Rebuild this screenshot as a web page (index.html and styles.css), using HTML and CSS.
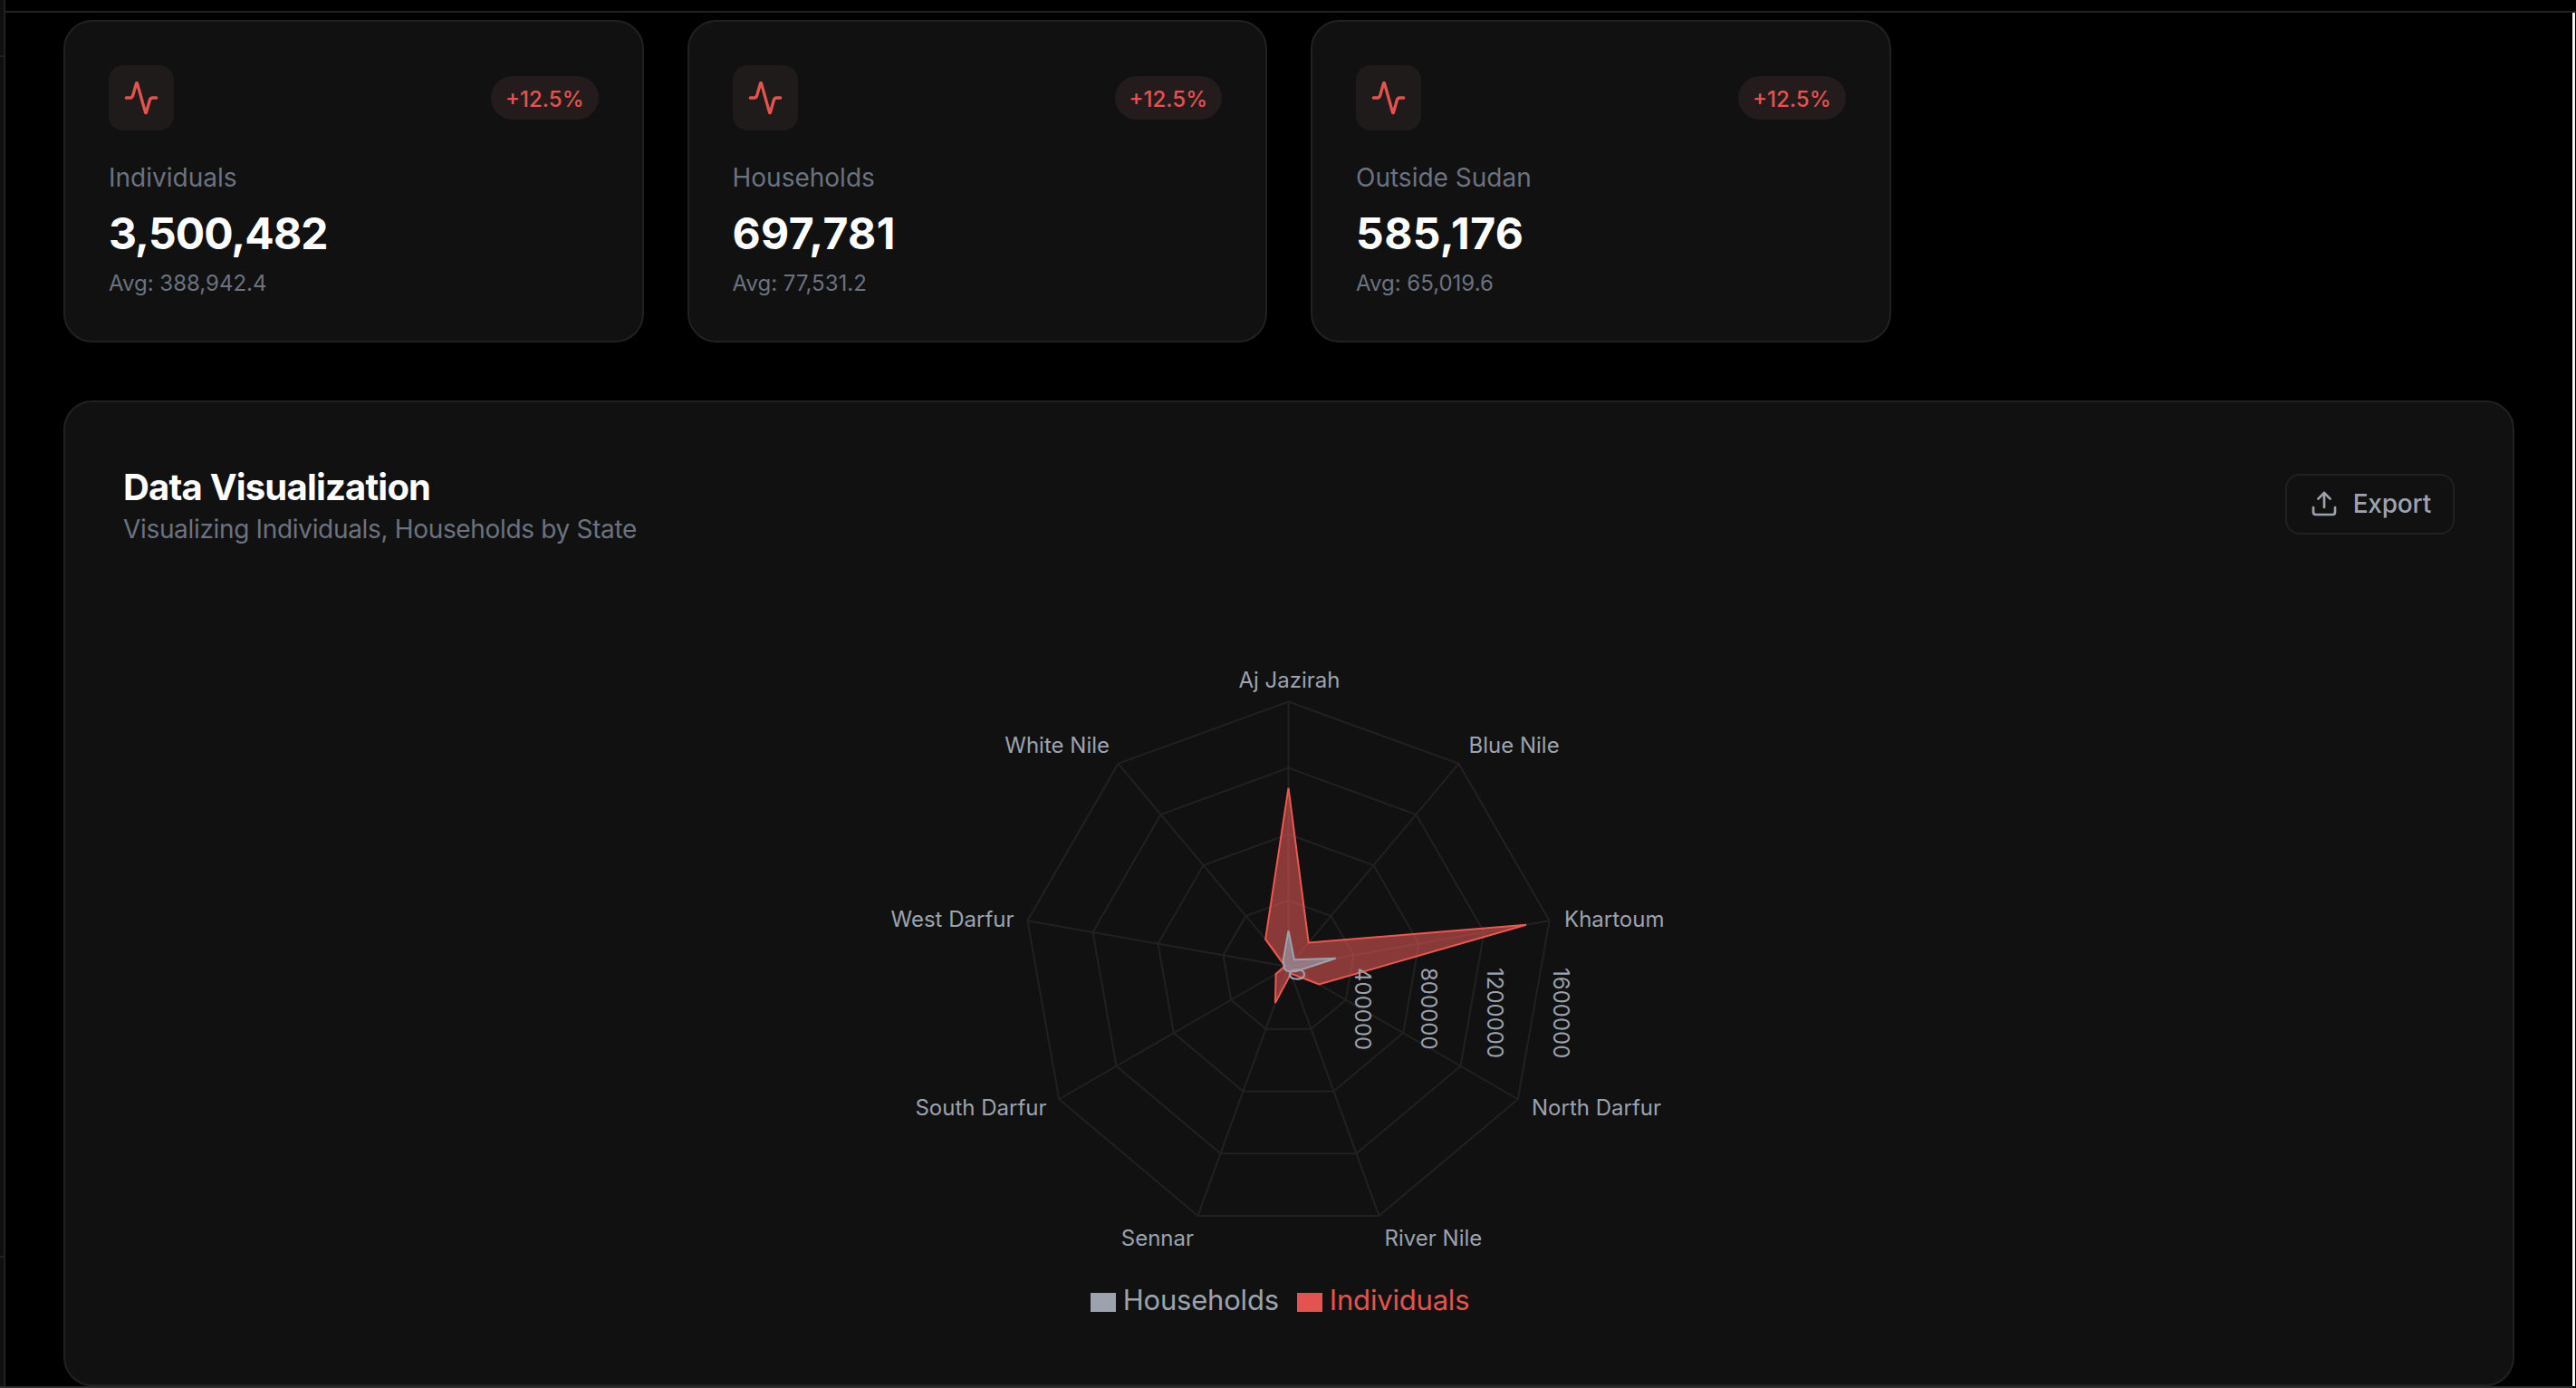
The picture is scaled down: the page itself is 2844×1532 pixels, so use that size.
FILE: index.html
```html
<!DOCTYPE html>
<html lang="en">
<head>
<meta charset="utf-8">
<title>Data Visualization</title>
<link rel="stylesheet" href="styles.css">
</head>
<body>
<div class="app">
  <div class="frame">
    <aside class="rail">
      <div class="rail-top"></div>
      <div class="rail-mid"></div>
    </aside>
    <div class="main">
      <div class="topbar"></div>
      <div class="main-row">
        <main class="content">
          <section class="stats">
            <article class="card">
              <div class="card-head">
                <span class="icon-box"><svg class="pulse" viewBox="0 0 24 24"><path d="M22 12h-2.48a2 2 0 0 0-1.93 1.46l-2.35 8.36a.25.25 0 0 1-.48 0L9.24 2.18a.25.25 0 0 0-.48 0l-2.35 8.36A2 2 0 0 1 4.49 12H2"/></svg></span>
                <span class="badge">+12.5%</span>
              </div>
              <p class="label">Individuals</p>
              <p class="value value-long">3,500,482</p>
              <p class="avg">Avg: 388,942.4</p>
            </article>
            <article class="card">
              <div class="card-head">
                <span class="icon-box"><svg class="pulse" viewBox="0 0 24 24"><path d="M22 12h-2.48a2 2 0 0 0-1.93 1.46l-2.35 8.36a.25.25 0 0 1-.48 0L9.24 2.18a.25.25 0 0 0-.48 0l-2.35 8.36A2 2 0 0 1 4.49 12H2"/></svg></span>
                <span class="badge">+12.5%</span>
              </div>
              <p class="label">Households</p>
              <p class="value">697,781</p>
              <p class="avg">Avg: 77,531.2</p>
            </article>
            <article class="card">
              <div class="card-head">
                <span class="icon-box"><svg class="pulse" viewBox="0 0 24 24"><path d="M22 12h-2.48a2 2 0 0 0-1.93 1.46l-2.35 8.36a.25.25 0 0 1-.48 0L9.24 2.18a.25.25 0 0 0-.48 0l-2.35 8.36A2 2 0 0 1 4.49 12H2"/></svg></span>
                <span class="badge">+12.5%</span>
              </div>
              <p class="label">Outside Sudan</p>
              <p class="value">585,176</p>
              <p class="avg">Avg: 65,019.6</p>
            </article>
          </section>
          <section class="panel">
            <header class="panel-head">
              <div>
                <h2 class="panel-title">Data Visualization</h2>
                <p class="panel-sub">Visualizing Individuals, Households by State</p>
              </div>
              <button class="export" type="button">
                <svg class="export-icon" viewBox="0 0 24 24"><path d="M21 15v4a2 2 0 0 1-2 2H5a2 2 0 0 1-2-2v-4"/><polyline points="17 8 12 3 7 8"/><line x1="12" y1="3" x2="12" y2="15"/></svg>
                Export
              </button>
            </header>
            <svg class="radar" viewBox="0 0 2574 731" width="2574" height="731">
              <g transform="translate(1286.5 399)">
                <g class="grid">
                  <polygon points="0,-73.1 47,-56 72,-12.7 63.3,36.6 25,68.7 -25,68.7 -63.3,36.6 -72,-12.7 -47,-56"/>
                  <polygon points="0,-146.25 94,-112 144,-25.4 126.7,73.1 50,137.4 -50,137.4 -126.7,73.1 -144,-25.4 -94,-112"/>
                  <polygon points="0,-219.4 141,-168 216,-38.1 190,109.7 75,206.2 -75,206.2 -190,109.7 -216,-38.1 -141,-168"/>
                  <polygon points="0,-292.5 188,-224.1 288.1,-50.8 253.3,146.25 100,274.9 -100,274.9 -253.3,146.25 -288.1,-50.8 -188,-224.1"/>
                  <line x1="0" y1="0" x2="0" y2="-292.5"/>
                  <line x1="0" y1="0" x2="188" y2="-224.1"/>
                  <line x1="0" y1="0" x2="288.1" y2="-50.8"/>
                  <line x1="0" y1="0" x2="253.3" y2="146.25"/>
                  <line x1="0" y1="0" x2="100" y2="274.9"/>
                  <line x1="0" y1="0" x2="-100" y2="274.9"/>
                  <line x1="0" y1="0" x2="-253.3" y2="146.25"/>
                  <line x1="0" y1="0" x2="-288.1" y2="-50.8"/>
                  <line x1="0" y1="0" x2="-188" y2="-224.1"/>
                </g>
                <polygon class="series-red" points="0,-197.3 22.2,-26.5 262.5,-46.3 33.8,19.5 2.7,7.5 -14.6,40 -13.9,8 -3.9,-0.7 -25.4,-30.3"/>
                <polygon class="series-gray" points="0,-39.7 6.4,-7.7 52.2,-9.2 8.7,5 2,5.6 -1.7,4.7 -4.3,2.5 -4.9,-0.9 -5.8,-6.9"/>
                <g class="axis-labels">
                  <text x="1" y="-308" text-anchor="middle">Aj Jazirah</text>
                  <text x="199" y="-236">Blue Nile</text>
                  <text x="304.500" y="-44">Khartoum</text>
                  <text x="268.500" y="164">North Darfur</text>
                  <text x="106" y="308">River Nile</text>
                  <text x="-104.500" y="308" text-anchor="end">Sennar</text>
                  <text x="-267" y="164" text-anchor="end">South Darfur</text>
                  <text x="-303" y="-44" text-anchor="end">West Darfur</text>
                  <text x="-197.500" y="-236" text-anchor="end">White Nile</text>
                </g>
                <g class="ticks">
                  <text transform="translate(0 1) rotate(90)">0</text>
                  <text transform="translate(73 1) rotate(90)">400000</text>
                  <text transform="translate(146 1) rotate(90)">800000</text>
                  <text transform="translate(219 1) rotate(90)">1200000</text>
                  <text transform="translate(292 1) rotate(90)">1600000</text>
                </g>
              </g>
            </svg>
            <ul class="legend">
              <li class="legend-item legend-gray"><span class="swatch"></span>Households</li>
              <li class="legend-item legend-red"><span class="swatch"></span>Individuals</li>
            </ul>
          </section>
        </main>
        <div class="edge"></div>
      </div>
    </div>
  </div>
  <div class="bottomline"></div>
</div>
</body>
</html>
```

FILE: styles.css
```css
* { box-sizing: border-box; }
html, body { margin: 0; height: 100%; background: #000; overflow: hidden; }
body { font-family: Inter, "Liberation Sans", sans-serif; color: #fff; }
p, h2, ul { margin: 0; padding: 0; }

.app { height: 100vh; display: flex; flex-direction: column; }
.frame { flex: 1; min-height: 0; display: flex; }
.bottomline { height: 2px; margin-right: 4px; background: #2d2d2d; }

.rail { width: 6px; flex: none; background: #0f0f0f; border-right: 2px solid #232021; }
.rail-top { height: 63px; border-bottom: 2px solid #232021; }
.rail-mid { height: 1325px; border-bottom: 2px solid #232021; }

.main { flex: 1; min-width: 0; display: flex; flex-direction: column; }
.topbar { height: 14px; flex: none; border-bottom: 2px solid #232021; }
.main-row { flex: 1; min-height: 0; display: flex; }
.content { flex: 1; min-width: 0; padding: 8px 64px 0; display: flex; flex-direction: column; gap: 64px; }
.edge { width: 3px; margin-right: 1px; flex: none; background: #f2f2f2; }

.stats { display: grid; grid-template-columns: repeat(4, 1fr); gap: 48px; }
.card { background: #111; border: 2px solid #232021; border-radius: 32px; padding: 48px 48px 47px; }
.card-head { display: flex; justify-content: space-between; align-items: center; margin-bottom: 32px; }
.icon-box { width: 72px; height: 72px; padding: 16px; border-radius: 16px; background: #1f1b1b; display: block; }
.pulse { display: block; width: 40px; height: 40px; fill: none; stroke: #e5534f; stroke-width: 2; stroke-linecap: round; stroke-linejoin: round; }
.badge { height: 48px; padding: 0 16px; border-radius: 24px; background: #241c1c; color: #e5534f; font-size: 24px; line-height: 52px; font-weight: 500; }
.label { font-size: 28px; line-height: 40px; color: #6b7280; }
.value { margin-top: 10px; font-size: 48px; line-height: 64px; font-weight: 700; color: #fff; letter-spacing: 0.45px; }
.value-long { letter-spacing: -0.9px; }
.avg { margin-top: 7px; font-size: 24px; line-height: 32px; color: #6b7280; }

.panel { flex: 1; min-height: 0; background: #111; border: 2px solid #232021; border-radius: 32px; padding: 64px 64px 0; }
.panel-head { display: flex; justify-content: space-between; align-items: center; }
.panel-title { padding-top: 4px; font-size: 40px; line-height: 52px; font-weight: 700; color: #fff; letter-spacing: -0.8px; }
.panel-sub { font-size: 28px; line-height: 40px; color: #6b7280; letter-spacing: -0.33px; }
.export { height: 67px; padding: 0 24px 0 25px; display: flex; align-items: center; gap: 16px; background: #111; border: 2px solid #232021; border-radius: 16px; color: #9ca3af; font-family: inherit; font-size: 28px; font-weight: 500; letter-spacing: -0.2px; }
.export-icon { width: 32px; height: 32px; fill: none; stroke: currentColor; stroke-width: 2; stroke-linecap: round; stroke-linejoin: round; }

.radar { display: block; margin-top: 64px; }
.grid polygon, .grid line { fill: none; stroke: #232021; stroke-width: 2; }
.series-red { fill: #dc5555; fill-opacity: .6; stroke: #ec5752; stroke-width: 2; }
.series-gray { fill: #9ca3af; fill-opacity: .6; stroke: #9ca3af; stroke-width: 2; }
.axis-labels text { font-size: 24px; fill: #9ca3af; }
.ticks text { font-size: 24px; fill: #9ca3af; }

.legend { list-style: none; display: flex; justify-content: center; margin-top: 12px; }
.legend-item { display: flex; align-items: center; gap: 8px; margin-right: 20px; font-size: 31px; line-height: 48px; letter-spacing: -0.2px; }
.swatch { width: 28px; height: 21px; margin-top: 4px; }
.legend-gray { color: #9ca3af; }
.legend-gray .swatch { background: #9ca3af; }
.legend-red { color: #e5534f; }
.legend-red .swatch { background: #e5534f; }
```
